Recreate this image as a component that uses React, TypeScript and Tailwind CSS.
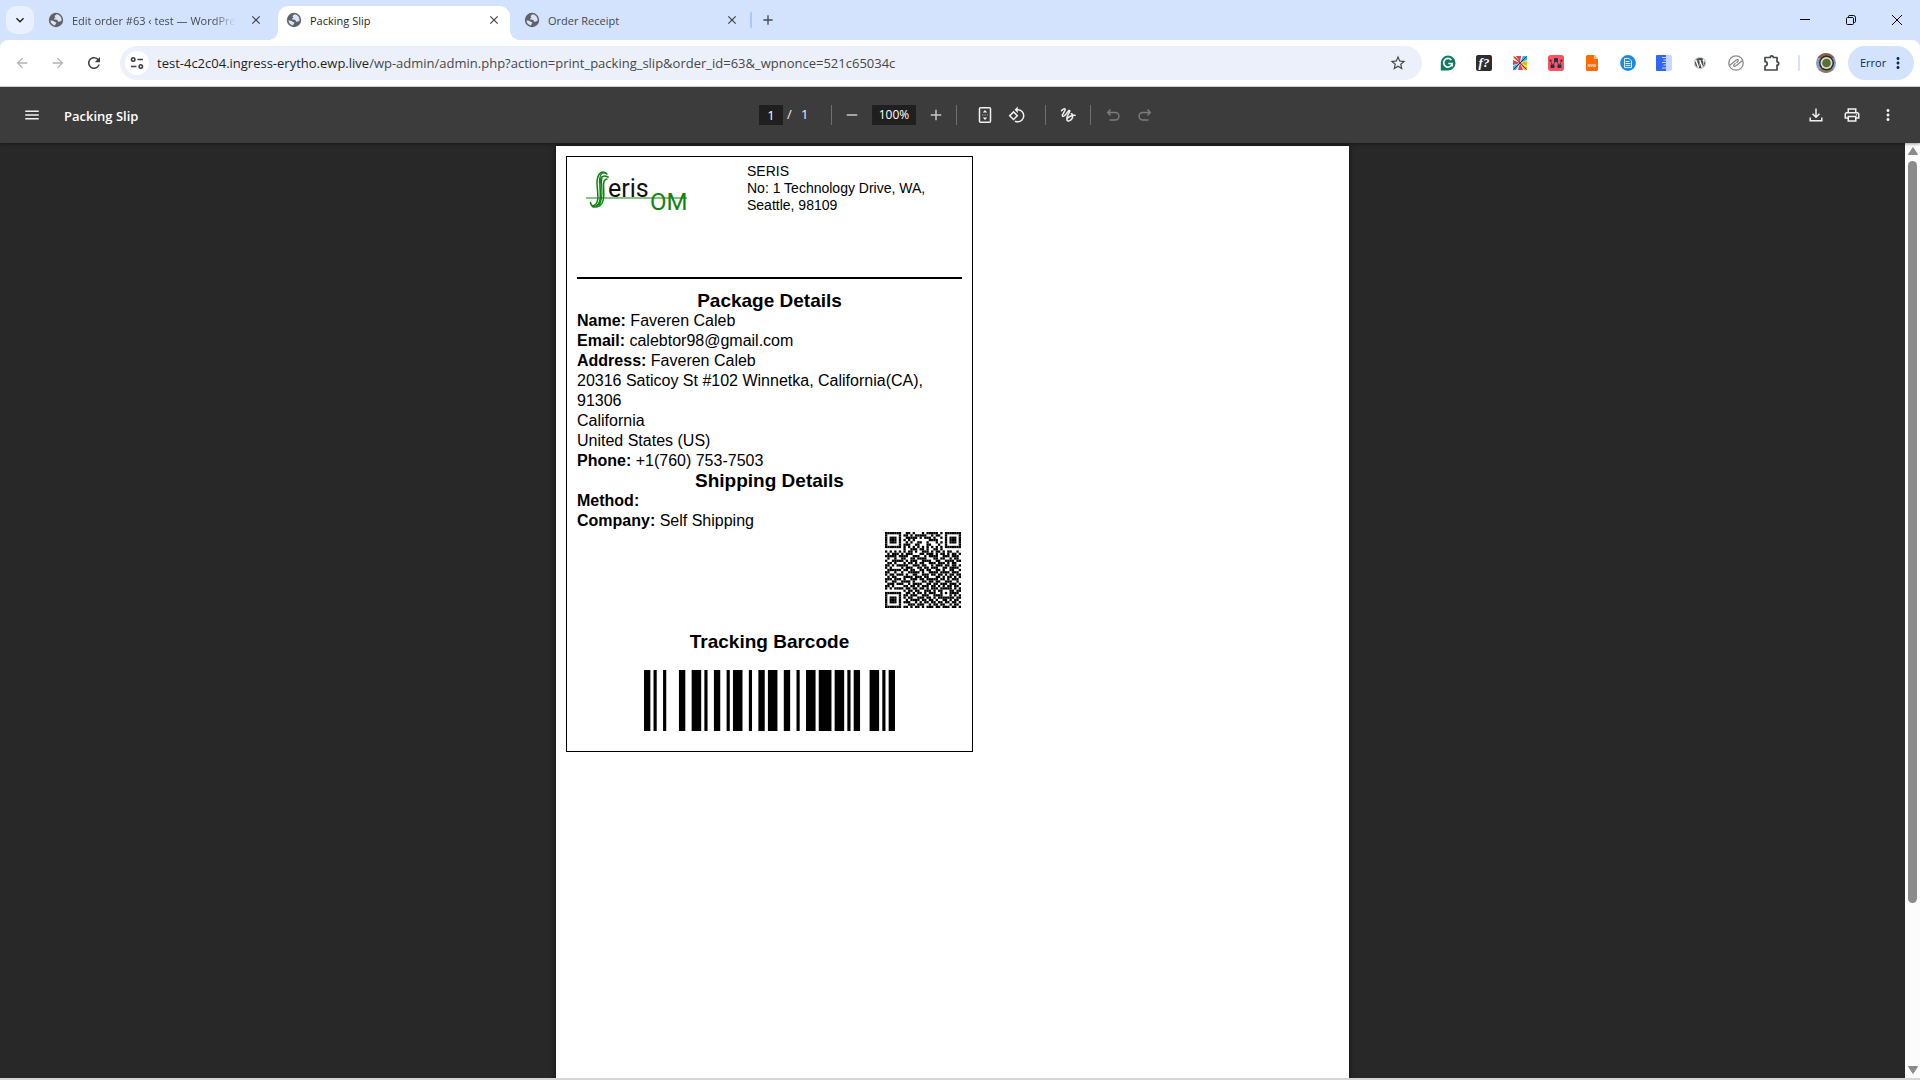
import type { ReactNode } from "react";
import {
  MdAdd,
  MdArrowBack,
  MdArrowForward,
  MdClose,
  MdKeyboardArrowDown,
  MdMenu,
  MdMoreVert,
  MdOutlinePrint,
  MdRefresh,
  MdRemove,
  MdRotate90DegreesCcw,
  MdStarBorder,
} from "react-icons/md";
import { FaWordpress } from "react-icons/fa";

const UI = "font-['Open_Sans','Noto_Sans',sans-serif]";

/* ---------- Browser icons ---------- */

function Globe() {
  return (
    <svg viewBox="0 0 16 16" className="size-4 shrink-0" aria-hidden="true">
      <circle cx="8" cy="8" r="7.2" fill="#5f6368" />
      <path d="M2.4 8.6c1.6-.3 3 .1 3.8.9.5.6 1.5.4 2 1 .5.7-.6 1.300-.8 2.100-.1.500-.2.800-.5 1-2.400-.5-4.300-2.500-4.500-5z" fill="#dbe4f5" />
      <path d="M8.500 2.300c-.4.900-1.700.9-1.900 1.700-.2.900.9.900.700 1.700-.2.700-1.300.500-1.200 1.200.2.900 2 .3 2.900.9.900.500.500 1.600 1.300 1.900 1 .3 1.500-.9 3.200-.8.500-3-1.500-6.200-5-6.600z" fill="#dbe4f5" />
    </svg>
  );
}

function SiteInfoIcon() {
  return (
    <svg viewBox="0 0 16 16" className="size-4" fill="none" stroke="#3c3f43" strokeWidth="1.600" aria-hidden="true">
      <circle cx="4.200" cy="4.500" r="1.700" />
      <path d="M8.500 4.500H14M2 11.500h5.500" />
      <circle cx="11.800" cy="11.500" r="1.700" />
    </svg>
  );
}

function GrammarlyIcon() {
  return (
    <svg viewBox="0 0 16 16" className="size-4" aria-hidden="true">
      <path d="M8 .5a7.500 7.500 0 1 1 0 15H.8V8A7.400 7.400 0 0 1 8 .5z" fill="#0d7a62" />
      <path d="M11.300 5A4.300 4.300 0 1 0 12 9.300M8.300 8.500h3.900v3" fill="none" stroke="#fff" strokeWidth="1.700" />
    </svg>
  );
}

function FontFinderIcon() {
  return (
    <span className="flex size-4 items-center justify-center rounded-[2px] bg-[#2e2e2e] font-['Liberation_Serif',serif] text-[13px] leading-4 font-bold text-white italic">
      f?
    </span>
  );
}

function PinwheelIcon() {
  return (
    <svg viewBox="0 0 16 16" className="size-4" aria-hidden="true">
      <rect x="1" y="1" width="14" height="14" fill="#fff" />
      <path d="M1 3l2-2 5 7z" fill="#f7b500" />
      <path d="M4 1h5L8 8z" fill="#e8356c" />
      <path d="M11 1h4v4L8 8z" fill="#23b5e8" />
      <path d="M15 6v5L8 8z" fill="#f7b500" />
      <path d="M15 12v3h-3L8 8z" fill="#f7b500" />
      <path d="M8 8l3 7H6z" fill="#e8356c" />
      <path d="M8 8l-4 7H1v-4z" fill="#23b5e8" />
      <path d="M8 8L1 10V5z" fill="#e8356c" />
      <path d="M2 1.500l12.500 13M14.500 1.500L1.500 14.500" stroke="#3a3550" strokeWidth="1" fill="none" />
    </svg>
  );
}

function NodesIcon() {
  return (
    <svg viewBox="0 0 16 16" className="size-4" aria-hidden="true">
      <rect width="16" height="16" rx="2.500" fill="#ff5263" />
      <path d="M8 5L4.500 11M8 5l3.500 6M2.500 5.500L4.500 11M13.500 5.500L11.500 11" stroke="#26324a" strokeWidth=".7" fill="none" />
      <rect x="6" y="3" width="4" height="4" rx=".5" fill="#26324a" />
      <rect x="2.500" y="9.500" width="4" height="3.500" rx=".5" fill="#26324a" />
      <rect x="9.500" y="9.500" width="4" height="3.500" rx=".5" fill="#26324a" />
      <circle cx="2.500" cy="5.500" r="1.100" fill="#26324a" />
      <circle cx="13.500" cy="5.500" r="1.100" fill="#26324a" />
    </svg>
  );
}

function SvgFileIcon() {
  return (
    <svg viewBox="0 0 16 16" className="size-4" aria-hidden="true">
      <path d="M3.500 0H10l4 4v10.500a1.500 1.500 0 0 1-1.500 1.500h-9A1.500 1.500 0 0 1 2 14.500v-13A1.500 1.500 0 0 1 3.500 0z" fill="#ff6a00" />
      <path d="M10 0l4 4h-4z" fill="#ffc08f" />
      <text x="8" y="11.500" textAnchor="middle" fontSize="4" fontWeight="700" fontFamily="Liberation Sans" fill="#fff">
        SVG
      </text>
    </svg>
  );
}

function DocCircleIcon() {
  return (
    <svg viewBox="0 0 16 16" className="size-4" aria-hidden="true">
      <circle cx="8" cy="8" r="7.900" fill="#1f8be0" />
      <path d="M4.500 3.500h4.500l2.500 2.500v6.500h-7z" fill="none" stroke="#d8ecfb" strokeWidth="1" />
      <path d="M5.500 6.500h4M5.500 8.500h5M5.500 10.500h5" stroke="#d8ecfb" strokeWidth="1" />
    </svg>
  );
}

function RulerIcon() {
  return (
    <svg viewBox="0 0 16 16" className="size-4" aria-hidden="true">
      <rect width="16" height="16" rx="2" fill="#c9d6fb" />
      <path d="M1 0h9v16H1a1 1 0 0 1-1-1V1a1 1 0 0 1 1-1z" fill="#2f66f6" />
      <path d="M6 2.500h4M7.500 5h2.500M6 7.500h4M7.500 10h2.500M6 13h4" stroke="#c9d6fb" strokeWidth="1.200" />
    </svg>
  );
}

function SlashCircleIcon() {
  return (
    <svg viewBox="0 0 16 16" className="size-4" fill="none" stroke="#8b8b8b" strokeWidth="1.300" aria-hidden="true">
      <circle cx="8" cy="8" r="7.200" />
      <path d="M1.500 10.500L8 5.200c1.300-1 2.800-.6 2.200.6L8.500 7.800M14.500 5.500L8 10.800c-1.300 1-2.800.6-2.200-.6L7.500 8.200" />
    </svg>
  );
}

function PuzzleIcon() {
  return (
    <svg viewBox="0 0 18 18" className="size-[18px]" fill="none" stroke="#45484c" strokeWidth="1.700" strokeLinejoin="round" aria-hidden="true">
      <path d="M2 3.500h5.200a1.600 1.600 0 0 1 3.200 0H14v4.300a1.700 1.700 0 0 1 0 3.400V16H2v-4a2.200 2.200 0 0 0 0-4.400z" />
    </svg>
  );
}

function Avatar() {
  return (
    <svg viewBox="0 0 20 20" className="size-5" aria-hidden="true">
      <clipPath id="avatar-clip">
        <circle cx="10" cy="10" r="10" />
      </clipPath>
      <g clipPath="url(#avatar-clip)">
        <rect width="20" height="20" fill="#8b9ac4" />
        <rect width="20" height="5" fill="#8a6242" />
        <rect y="16" width="20" height="4" fill="#8d7a62" />
        <circle cx="10.500" cy="10" r="7.500" fill="#2b2c2b" />
        <circle cx="10.500" cy="10" r="6" fill="#d7dbd0" />
        <circle cx="10.500" cy="10" r="4.300" fill="#3f7c2c" />
        <path d="M7 9l2-1.500 2 2 2-2M8 12l2-1 3 1" stroke="#b04a3a" strokeWidth="1" fill="none" />
      </g>
    </svg>
  );
}

/* ---------- Browser chrome ---------- */

function IconButton({ label, className = "", children }: { label: string; className?: string; children: ReactNode }) {
  return (
    <button type="button" aria-label={label} className={`flex shrink-0 items-center justify-center ${className}`}>
      {children}
    </button>
  );
}

function Tab({ title, active = false, faded = false }: { title: string; active?: boolean; faded?: boolean }) {
  return (
    <div
      className={`relative flex h-[34px] w-[232px] items-center pr-2 pb-1.5 pl-2 ${active ? "rounded-t-[10px] bg-white text-[#1f1f1f]" : "text-[#45484f]"}`}
    >
      {active && (
        <>
          <span className="absolute bottom-0 -left-2.5 size-2.5 bg-[radial-gradient(circle_at_0_0,transparent_10px,white_10px)]" />
          <span className="absolute -right-2.5 bottom-0 size-2.5 bg-[radial-gradient(circle_at_100%_0,transparent_10px,white_10px)]" />
        </>
      )}
      <Globe />
      <span
        className={`ml-2 min-w-0 flex-1 overflow-hidden pt-0.5 text-[11px] leading-4 whitespace-nowrap ${faded ? "mr-3 [mask-image:linear-gradient(to_right,black_86%,transparent)]" : ""}`}
      >
        {title}
      </span>
      <IconButton label={`Close ${title}`} className="size-4 text-[#3c3f44]">
        <MdClose className="size-3.5" />
      </IconButton>
    </div>
  );
}

function TabStrip() {
  return (
    <header className="flex h-10 shrink-0 bg-[#d3e3fd]">
      <IconButton label="Search tabs" className="mt-1.5 ml-1.5 size-7 rounded-[10px] bg-[#e9f1fe] text-[#1f1f1f]">
        <MdKeyboardArrowDown className="size-4" />
      </IconButton>
      <div className="mt-1.5 ml-1.5 flex gap-1.5">
        <Tab title="Edit order #63 ‹ test — WordPre" faded />
        <Tab title="Packing Slip" active />
        <Tab title="Order Receipt" />
      </div>
      <span className="mt-3 ml-0.5 h-4 w-0.5 rounded-full bg-[#a8c7fa]" />
      <IconButton label="New tab" className="mt-1.5 ml-0.5 size-7 text-[#45484c]">
        <MdAdd className="size-4" />
      </IconButton>
      <div className="ml-auto flex h-10 text-black">
        <IconButton label="Minimize" className="w-[46px]">
          <svg viewBox="0 0 10 10" className="size-2.5" stroke="currentColor" fill="none">
            <path d="M0 4.500h10" />
          </svg>
        </IconButton>
        <IconButton label="Restore" className="w-[46px]">
          <svg viewBox="0 0 10 10" className="size-2.5" stroke="currentColor" fill="none">
            <rect x=".5" y="2.500" width="7" height="7" rx="1" />
            <path d="M2.500 2.500V1.500a1 1 0 0 1 1-1h4a2 2 0 0 1 2 2v4a1 1 0 0 1-1 1h-1" />
          </svg>
        </IconButton>
        <IconButton label="Close window" className="w-[46px]">
          <svg viewBox="0 0 10 10" className="size-2.5" stroke="currentColor" fill="none">
            <path d="M0 0l10 10M10 0L0 10" />
          </svg>
        </IconButton>
      </div>
    </header>
  );
}

const extensions: { label: string; icon: ReactNode }[] = [
  { label: "Grammarly", icon: <GrammarlyIcon /> },
  { label: "Font finder", icon: <FontFinderIcon /> },
  { label: "Pinwheel", icon: <PinwheelIcon /> },
  { label: "Site map", icon: <NodesIcon /> },
  { label: "SVG export", icon: <SvgFileIcon /> },
  { label: "Reader", icon: <DocCircleIcon /> },
  { label: "Page ruler", icon: <RulerIcon /> },
  { label: "WordPress", icon: <FaWordpress className="size-3 text-[#45484c]" /> },
  { label: "Link checker", icon: <SlashCircleIcon /> },
  { label: "Extensions", icon: <PuzzleIcon /> },
];

function AddressBar() {
  return (
    <div className="bg-[#d3e3fd]">
      <div className="flex h-[47px] items-center rounded-t-lg border-b border-[#dcdcdc] bg-white pr-1.5 pl-1">
        <IconButton label="Back" className="size-9 text-[#b3b3b3]">
          <MdArrowBack className="size-4" />
        </IconButton>
        <IconButton label="Forward" className="size-9 text-[#b3b3b3]">
          <MdArrowForward className="size-4" />
        </IconButton>
        <IconButton label="Reload" className="size-9 text-[#3c3f43]">
          <MdRefresh className="size-[18px]" />
        </IconButton>
        <div className="ml-2 flex h-[34px] min-w-0 flex-1 items-center rounded-full bg-[#ecf0fa] pr-2 pl-[5px]">
          <IconButton label="View site information" className="size-6 rounded-full bg-white">
            <SiteInfoIcon />
          </IconButton>
          <a href="#slip" className="ml-2 min-w-0 flex-1 truncate text-[13px] leading-5 text-[#474747]">
            <span className="text-[#1f1f1f]">test-4c2c04.ingress-erytho.ewp.live</span>
            /wp-admin/admin.php?action=print_packing_slip&amp;order_id=63&amp;_wpnonce=521c65034c
          </a>
          <IconButton label="Bookmark this tab" className="size-8 text-[#45484c]">
            <MdStarBorder className="size-[18px]" />
          </IconButton>
        </div>
        <div className="ml-2 flex">
          {extensions.map((ext) => (
            <IconButton key={ext.label} label={ext.label} className="h-8 w-9">
              {ext.icon}
            </IconButton>
          ))}
        </div>
        <span className="ml-2 h-4 w-0.5 rounded-full bg-[#d3e3fd]" />
        <IconButton label="Profile" className="ml-2 h-8 w-9">
          <Avatar />
        </IconButton>
        <button
          type="button"
          className="ml-1 flex h-[34px] w-[66px] items-center justify-between rounded-full bg-[#d3e3fd] pr-[7px] pl-3 text-[11px] leading-4 text-[#0a2a66]"
        >
          Error
          <MdMoreVert className="size-[18px]" />
        </button>
      </div>
    </div>
  );
}

/* ---------- PDF viewer toolbar ---------- */

function Divider({ className = "" }: { className?: string }) {
  return <span className={`h-5 w-px shrink-0 bg-[#6f6f6f] ${className}`} />;
}

function PdfToolbar() {
  return (
    <div className="relative z-10 grid h-14 shrink-0 grid-cols-[1fr_auto_1fr] items-center bg-[#3c3c3c] text-[#f1f1f1] shadow-[0_1px_3px_rgba(0,0,0,0.4)]">
      <div className="flex items-center pl-4">
        <IconButton label="Menu" className="size-8">
          <MdMenu className="size-[18px]" />
        </IconButton>
        <h1 className="ml-4 pt-0.5 text-[13px] leading-5 font-semibold text-white">Packing Slip</h1>
      </div>

      <div className="flex items-center text-[13px]">
        <input
          aria-label="Page number"
          defaultValue="1"
          className="h-5 w-6 bg-[#1f1f1f] text-center text-[13px] leading-5 text-white"
        />
        <span className="ml-1 w-1.5">/</span>
        <span className="ml-2 w-2">1</span>
        <Divider className="ml-[22px]" />
        <IconButton label="Zoom out" className="ml-1 size-8 text-[#c7c7c7]">
          <MdRemove className="size-[18px]" />
        </IconButton>
        <input
          aria-label="Zoom level"
          defaultValue="100%"
          className="mx-1 h-5 w-11 bg-[#1f1f1f] text-center text-[12px] leading-5 text-white"
        />
        <IconButton label="Zoom in" className="size-8 text-[#c7c7c7]">
          <MdAdd className="size-[18px]" />
        </IconButton>
        <Divider className="ml-1" />
        <IconButton label="Fit to page" className="ml-3 size-8">
          <svg viewBox="0 0 16 16" className="size-4" fill="none" stroke="currentColor" strokeWidth="1.500">
            <rect x="2.500" y=".8" width="11" height="14.400" rx="1" />
            <path d="M8 3l2.300 2.500H5.700zM8 13l2.300-2.500H5.700z" fill="currentColor" stroke="none" />
            <path d="M5 8h6" strokeWidth="1" strokeDasharray="1.500 1" opacity=".6" />
          </svg>
        </IconButton>
        <IconButton label="Rotate counterclockwise" className="size-8">
          <MdRotate90DegreesCcw className="size-[18px]" />
        </IconButton>
        <Divider className="ml-3" />
        <IconButton label="Draw" className="ml-1.5 size-8">
          <svg viewBox="0 0 16 16" className="size-4" fill="none" stroke="currentColor" strokeWidth="1.500" strokeLinecap="round">
            <path d="M1.500 3.800C2.500 2.500 4.600 1 5.200 2.300 5.900 4 1.600 7.200 2.400 9c.9 1.700 4-2.200 5.800-4.900.6-1 1.900-.6 1.500.5C9 6.500 6.500 9 6.800 11.500" />
            <path d="M15 8.300c-2.800-.3-8.500 2-8 4.700.6 2.200 4.800.2 5.500-2.500.5-2-.3-3.500-1.200-3.800" />
          </svg>
        </IconButton>
        <Divider className="ml-1.5" />
        <IconButton label="Undo" className="ml-1.5 size-8 text-[#7d7d7d]">
          <svg viewBox="0 0 16 16" className="size-4" fill="none" stroke="currentColor" strokeWidth="1.400">
            <path d="M5.500 2.500L2.700 5.500l2.800 3M3 5.500h7.200a3.700 3.700 0 0 1 0 7.500H4.500" />
          </svg>
        </IconButton>
        <IconButton label="Redo" className="size-8 text-[#7d7d7d]">
          <svg viewBox="0 0 16 16" className="size-4" fill="none" stroke="currentColor" strokeWidth="1.400">
            <path d="M10.500 2.500l2.800 3-2.800 3M13 5.500H5.800a3.700 3.700 0 0 0 0 7.500h5.700" />
          </svg>
        </IconButton>
      </div>

      <div className="flex items-center justify-end gap-1 pr-4">
        <IconButton label="Download" className="size-8">
          <svg viewBox="0 0 16 16" className="size-4" fill="none" stroke="currentColor" strokeWidth="1.500">
            <path d="M8 1.500v8.500M4.500 6.800L8 10.200l3.500-3.400M2.200 10.500v3.300h11.600v-3.300" />
          </svg>
        </IconButton>
        <IconButton label="Print" className="size-8">
          <MdOutlinePrint className="size-[18px]" />
        </IconButton>
        <IconButton label="More actions" className="size-8">
          <MdMoreVert className="size-[18px]" />
        </IconButton>
      </div>
    </div>
  );
}

/* ---------- Packing slip ---------- */

function SerisLogo() {
  return (
    <svg viewBox="0 -1 104 44" className="h-11 w-[104px]" role="img" aria-label="Seris OM">
      <g fill="none" stroke="#108410" strokeLinecap="round">
        <path d="M1 28h101" strokeWidth="1.200" strokeLinecap="butt" />
        <path d="M22 4c-6-5-10 1-10 9 0 8 4 22-5 23" strokeWidth="1.500" />
        <path d="M23 7c-6-3-8 1-8 8 0 8 3 21-7 22" strokeWidth="1.700" />
        <path d="M21 3c-5-2-7 4-6.500 10M17 7c-2 6 3 21-3 28" strokeWidth="1.300" />
        <path d="M22 9c-6 1-2 10-3.500 20-1 6-5 9-10 7.500-2-1-3-2-3-4" strokeWidth="1.500" />
      </g>
      <text x="23" y="27" fontSize="25" fontFamily="Roboto" fill="#111">
        eris
      </text>
      <text x="65" y="40" fontSize="24" fontFamily="Roboto" fill="#108410">
        OM
      </text>
    </svg>
  );
}

const qrRows = [
  "111111100110100010111110101111111",
  "100000101101011111001011001000001",
  "101110100111110101110100101011101",
  "101110101010100000011110001011101",
  "101110100101001100100010101011101",
  "100000101110011000110001001000001",
  "111111101010101010101010101111111",
  "000000001001110110100110100000000",
  "101010101011010011101011010110010",
  "010111010111000110111010110101101",
  "111110111100111001011110011101110",
  "010010011001101111000110110010110",
  "100111110101110011110011001111011",
  "011010001011010110011101110101100",
  "110101111100111011001011101101101",
  "101000010111001101101110011011110",
  "011111101101100110110011010011001",
  "110010010011111010011110111101110",
  "101101110100110011101101101011011",
  "010110001111011101100011010110101",
  "111011101001110110111110110101110",
  "100110011110100011011011001110010",
  "011101110010111100110110111011101",
  "110100001101101011101101010110110",
  "101011110110110110101110111110101",
  "000000001011011001110101100011011",
  "111111100110101101011100101011110",
  "100000101101110011100111100010101",
  "101110101011001110110101111111011",
  "101110100101111011011010011010110",
  "101110101110010101101101101101101",
  "100000100011101110010110110010110",
  "111111101101011010111011011101101",
];

function QrCode() {
  return (
    <svg viewBox="0 0 33 33" className="size-[76px]" role="img" aria-label="Order QR code">
      {qrRows.map((row, y) =>
        row.split("").map((cell, x) => (cell === "1" ? <rect key={`${x}-${y}`} x={x} y={y} width="1" height="1" /> : null)),
      )}
    </svg>
  );
}

/* Each pair is the start module and the width of one bar, out of 79 modules. */
const bars: [number, number][] = [
  [0, 2], [3, 1], [6, 1], [11, 2], [15, 3], [19, 1], [22, 2], [26, 1], [28, 3], [33, 1], [36, 2],
  [39, 3], [44, 2], [48, 1], [51, 3], [55, 4], [60, 3], [64, 1], [66, 2], [71, 3], [75, 1], [77, 2],
];

function Barcode() {
  return (
    <svg viewBox="0 0 79 10" preserveAspectRatio="none" className="h-[61px] w-[251px]" role="img" aria-label="Tracking barcode">
      {bars.map(([x, width]) => (
        <rect key={x} x={x} y="0" width={width} height="10" />
      ))}
    </svg>
  );
}

function SectionTitle({ children }: { children: ReactNode }) {
  return <h2 className="text-center text-[19px] leading-5 font-bold">{children}</h2>;
}

function PackingSlip() {
  return (
    <article
      id="slip"
      className="w-[407px] border border-black px-2.5 pb-5 font-['Liberation_Sans',Arial,sans-serif] text-base leading-5 text-black"
    >
      <div className="flex h-[122px] items-start border-b-2 border-black">
        <div className="w-[170px] pt-3 pl-2">
          <SerisLogo />
        </div>
        <address className="pt-1.5 text-sm leading-[17px] not-italic">
          SERIS
          <br />
          No: 1 Technology Drive, WA,
          <br />
          Seattle, 98109
        </address>
      </div>

      <section className="pt-3">
        <SectionTitle>Package Details</SectionTitle>
        <p>
          <strong>Name:</strong> Faveren Caleb
        </p>
        <p>
          <strong>Email:</strong> calebtor98@gmail.com
        </p>
        <p>
          <strong>Address:</strong> Faveren Caleb
          <br />
          20316 Saticoy St #102 Winnetka, California(CA), 91306
          <br />
          California
          <br />
          United States (US)
        </p>
        <p>
          <strong>Phone:</strong> +1(760) 753-7503
        </p>
      </section>

      <section>
        <SectionTitle>Shipping Details</SectionTitle>
        <p>
          <strong>Method:</strong>
        </p>
        <p>
          <strong>Company:</strong> Self Shipping
        </p>
        <div className="flex justify-end pt-px pr-px">
          <QrCode />
        </div>
      </section>

      <section className="flex flex-col items-center pt-6">
        <SectionTitle>Tracking Barcode</SectionTitle>
        <div className="pt-[18px]">
          <Barcode />
        </div>
      </section>
    </article>
  );
}

function Scrollbar() {
  return (
    <div className="flex w-[15px] shrink-0 flex-col items-center bg-[#fcfcfc] pt-1 pb-1" aria-hidden="true">
      <svg viewBox="0 0 10 8" className="h-2 w-2.5 shrink-0" fill="#8b8b8b">
        <path d="M5 .5L9.500 7.500H.5z" stroke="#8b8b8b" strokeLinejoin="round" />
      </svg>
      <div className="mt-1.5 flex w-full flex-1 justify-center">
        <div className="h-[82%] w-[9px] rounded-full bg-[#8b8b8b]" />
      </div>
      <svg viewBox="0 0 10 8" className="h-2 w-2.5 shrink-0" fill="#8b8b8b">
        <path d="M5 7.500L.5.500h9z" stroke="#8b8b8b" strokeLinejoin="round" />
      </svg>
    </div>
  );
}

export default function App() {
  return (
    <div className={`flex h-screen flex-col overflow-hidden bg-[#282828] ${UI}`}>
      <TabStrip />
      <AddressBar />
      <PdfToolbar />
      <div className="flex min-h-0 flex-1">
        <main className="flex min-w-0 flex-1 justify-center overflow-hidden pt-[3px]">
          <div className="h-[1123px] w-[793px] shrink-0 bg-white p-2.5 shadow-[0_0_5px_rgba(0,0,0,0.6)]">
            <PackingSlip />
          </div>
        </main>
        <Scrollbar />
      </div>
      <div className="h-0.5 shrink-0 bg-[#d6d6d6]" />
    </div>
  );
}
